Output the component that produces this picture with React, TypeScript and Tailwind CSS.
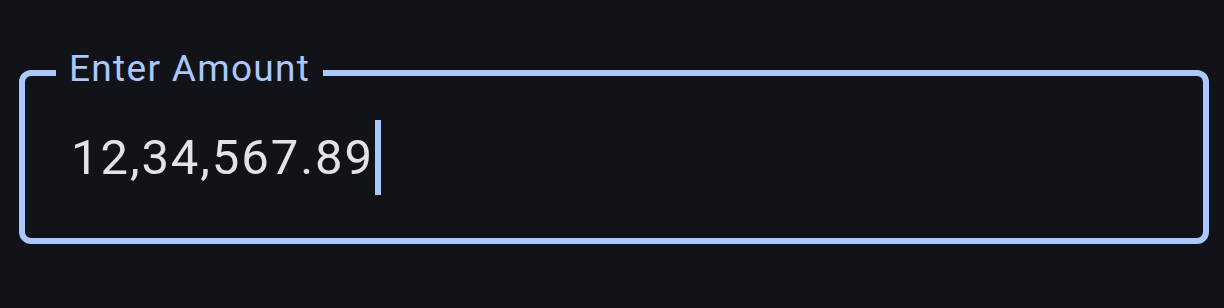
export default function App() {
  return (
    <div className="min-h-[308px] w-full bg-[#111318] pt-[70px] pl-[19px] pr-[15px] font-['Roboto',sans-serif]">
      <div className="relative h-[174px] rounded-[12px] border-[6px] border-[#aac7ff] pl-[46px] pt-[44px]">
        <span className="absolute left-[31px] top-[-29px] bg-[#111318] px-[13px] text-[37px] leading-[44px] tracking-[1.3px] text-[#aac7ff]">
          Enter Amount
        </span>
        <div className="flex h-[75px] items-stretch">
          <span className="text-[49px] leading-[75px] tracking-[1.9px] text-[#e2e2e9]">
            12,34,567.89
          </span>
          <span className="ml-[1px] w-[6px] bg-[#aac7ff]" />
        </div>
      </div>
    </div>
  );
}
